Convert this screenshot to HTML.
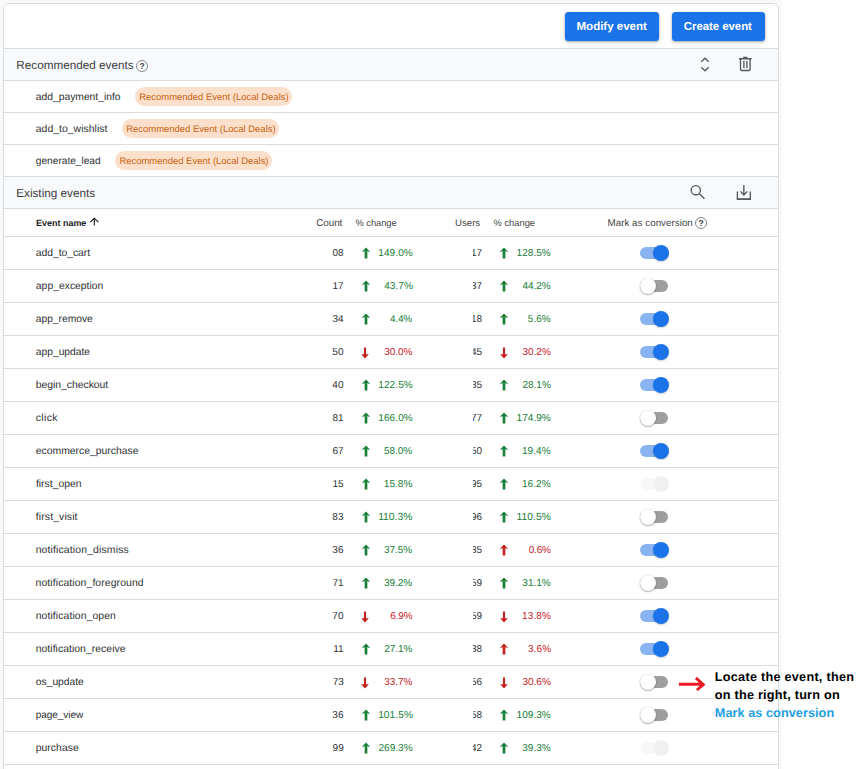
<!DOCTYPE html>
<html lang="en"><head><meta charset="utf-8"><title>Events</title>
<style>
*{box-sizing:border-box;margin:0;padding:0}
html,body{width:867px;height:769px;overflow:hidden;background:#fff}
body{font-family:"Liberation Sans",sans-serif;position:relative;text-rendering:geometricPrecision}
.bg{position:absolute;left:0;top:0;width:782px;height:769px;background:#f8f9fa}
.card{position:absolute;left:3px;top:3px;width:776px;height:800px;background:#fff;border:1px solid #dadce0;border-radius:6px 6px 0 0;overflow:hidden}
.band{position:absolute;left:4px;width:774px;background:#f8f9fa}
.hl{position:absolute;left:4px;width:774px;height:1px;background:#dadce0}
.t{position:absolute;white-space:nowrap;line-height:14px}
.u{position:absolute;left:472.5px;width:9.8px;height:14px;overflow:hidden}
.u span{position:absolute;right:0.2px;top:0;font-size:10px;line-height:14px;color:#2e3134;white-space:nowrap}
.btn{position:absolute;top:12px;height:29px;background:#1a73e8;border-radius:3.5px;box-shadow:0 1px 2px rgba(60,64,67,.3),0 1px 3px 1px rgba(60,64,67,.15)}
.pill{position:absolute;width:157px;height:18.6px;border-radius:9.3px;background:#fde0cb}
.ar{position:absolute;overflow:visible}
.ic{position:absolute;overflow:visible}
.help{position:absolute;width:12px;height:12px;border-radius:50%;border:1px solid #80868b;background:#fff;font-size:8.5px;font-weight:bold;line-height:10px;text-align:center;color:#3c4043}
.tg{position:absolute;left:640px;width:28.8px;height:11.4px}
.tg i{position:absolute;left:0;top:0;width:27.9px;height:11.4px;border-radius:6px;background:#9e9e9e}
.tg b{position:absolute;left:0;top:-2.4px;width:16.2px;height:16.2px;border-radius:50%;background:#fff;box-shadow:0 1px 1.5px rgba(0,0,0,.3),0 0 1px rgba(0,0,0,.25)}
.tg.on i{background:#8ab4f1}
.tg.on b{left:12.7px;background:#1a73e8;box-shadow:0 1px 2px rgba(0,0,0,.2)}
.tg.dis i{background:#f8f8f8}
.tg.dis b{left:12.7px;background:#f1f1f1;box-shadow:none}
</style></head><body>
<div class="bg"></div>
<div class="card"></div>
<div class="band" style="top:49px;height:31px"></div>
<div class="band" style="top:177px;height:31px"></div>
<div class="hl" style="top:48px"></div><div class="hl" style="top:80px"></div><div class="hl" style="top:112px"></div><div class="hl" style="top:144px"></div><div class="hl" style="top:176px"></div><div class="hl" style="top:208px"></div><div class="hl" style="top:236px"></div><div class="hl" style="top:269px"></div><div class="hl" style="top:302px"></div><div class="hl" style="top:335px"></div><div class="hl" style="top:368px"></div><div class="hl" style="top:401px"></div><div class="hl" style="top:434px"></div><div class="hl" style="top:467px"></div><div class="hl" style="top:500px"></div><div class="hl" style="top:533px"></div><div class="hl" style="top:566px"></div><div class="hl" style="top:599px"></div><div class="hl" style="top:632px"></div><div class="hl" style="top:665px"></div><div class="hl" style="top:698px"></div><div class="hl" style="top:731px"></div><div class="hl" style="top:764px"></div>
<div class="btn" style="left:565px;width:94px"></div>
<div class="btn" style="left:672px;width:93px"></div>
<div class="pill" style="left:135.0px;top:87px"></div><div class="pill" style="left:122.0px;top:119px"></div><div class="pill" style="left:115.2px;top:151px"></div>

<svg class="ic" style="left:0;top:0" width="782" height="210" viewBox="0 0 782 210" fill="none" stroke="#54585d" stroke-width="1.35">
<path d="M701.3 61.8 705 58.3l3.7 3.5M701.3 67.2l3.7 3.5 3.7-3.5"/>
<path d="M739 58.7h12.6M743.2 57.6h4.2" stroke-width="1.5"/>
<path d="M740.5 59v10.3a1.2 1.2 0 0 0 1.2 1.2h7.2a1.2 1.2 0 0 0 1.2-1.2V59M743.9 60.8v7.2M746.9 60.8v7.2"/>
<circle cx="695.8" cy="190.2" r="4.6"/>
<path d="M699.1 193.5l5.3 5.3"/>
<path d="M737.4 191.6v7.5h12.9v-7.5"/>
<path d="M736.8 199.2h14.1" stroke-width="1.6"/>
<path d="M743.85 185v10.2M740.4 191.4l3.45 3.6 3.45-3.6"/>
</svg>

<div class="help" style="left:136px;top:59.8px">?</div>
<div class="help" style="left:695.1px;top:217px">?</div>
<svg class="ic" style="left:86px;top:214px" width="16" height="14" viewBox="86 214 16 14"><path d="M94.3 225.5v-6.9M90.2 222.1l4.1-3.8 4.1 3.8" fill="none" stroke="#202124" stroke-width="1.15"/></svg>
<svg class="ar" style="left:360.6px;top:247.4px" width="10" height="12" viewBox="-5 -6 10 12"><path fill="#188038" d="M0-5.6 3.8-1.4 3.3-.9 1.35-2V5.5h-2.7V-2L-3.3-.9-3.8-1.4z"/></svg><svg class="ar" style="left:499.2px;top:247.4px" width="10" height="12" viewBox="-5 -6 10 12"><path fill="#188038" d="M0-5.6 3.8-1.4 3.3-.9 1.35-2V5.5h-2.7V-2L-3.3-.9-3.8-1.4z"/></svg><svg class="ar" style="left:360.6px;top:280.4px" width="10" height="12" viewBox="-5 -6 10 12"><path fill="#188038" d="M0-5.6 3.8-1.4 3.3-.9 1.35-2V5.5h-2.7V-2L-3.3-.9-3.8-1.4z"/></svg><svg class="ar" style="left:499.2px;top:280.4px" width="10" height="12" viewBox="-5 -6 10 12"><path fill="#188038" d="M0-5.6 3.8-1.4 3.3-.9 1.35-2V5.5h-2.7V-2L-3.3-.9-3.8-1.4z"/></svg><svg class="ar" style="left:360.6px;top:313.4px" width="10" height="12" viewBox="-5 -6 10 12"><path fill="#188038" d="M0-5.6 3.8-1.4 3.3-.9 1.35-2V5.5h-2.7V-2L-3.3-.9-3.8-1.4z"/></svg><svg class="ar" style="left:499.2px;top:313.4px" width="10" height="12" viewBox="-5 -6 10 12"><path fill="#188038" d="M0-5.6 3.8-1.4 3.3-.9 1.35-2V5.5h-2.7V-2L-3.3-.9-3.8-1.4z"/></svg><svg class="ar" style="left:359.9px;top:346.5px" width="10" height="12" viewBox="-5 -6 10 12"><path fill="#c5221f" d="M-1.05-5.5h2.1V1.2H3.8L0 5.5-3.8 1.2h2.75z"/></svg><svg class="ar" style="left:498.5px;top:346.5px" width="10" height="12" viewBox="-5 -6 10 12"><path fill="#c5221f" d="M-1.05-5.5h2.1V1.2H3.8L0 5.5-3.8 1.2h2.75z"/></svg><svg class="ar" style="left:360.6px;top:379.4px" width="10" height="12" viewBox="-5 -6 10 12"><path fill="#188038" d="M0-5.6 3.8-1.4 3.3-.9 1.35-2V5.5h-2.7V-2L-3.3-.9-3.8-1.4z"/></svg><svg class="ar" style="left:499.2px;top:379.4px" width="10" height="12" viewBox="-5 -6 10 12"><path fill="#188038" d="M0-5.6 3.8-1.4 3.3-.9 1.35-2V5.5h-2.7V-2L-3.3-.9-3.8-1.4z"/></svg><svg class="ar" style="left:360.6px;top:412.4px" width="10" height="12" viewBox="-5 -6 10 12"><path fill="#188038" d="M0-5.6 3.8-1.4 3.3-.9 1.35-2V5.5h-2.7V-2L-3.3-.9-3.8-1.4z"/></svg><svg class="ar" style="left:499.2px;top:412.4px" width="10" height="12" viewBox="-5 -6 10 12"><path fill="#188038" d="M0-5.6 3.8-1.4 3.3-.9 1.35-2V5.5h-2.7V-2L-3.3-.9-3.8-1.4z"/></svg><svg class="ar" style="left:360.6px;top:445.4px" width="10" height="12" viewBox="-5 -6 10 12"><path fill="#188038" d="M0-5.6 3.8-1.4 3.3-.9 1.35-2V5.5h-2.7V-2L-3.3-.9-3.8-1.4z"/></svg><svg class="ar" style="left:499.2px;top:445.4px" width="10" height="12" viewBox="-5 -6 10 12"><path fill="#188038" d="M0-5.6 3.8-1.4 3.3-.9 1.35-2V5.5h-2.7V-2L-3.3-.9-3.8-1.4z"/></svg><svg class="ar" style="left:360.6px;top:478.4px" width="10" height="12" viewBox="-5 -6 10 12"><path fill="#188038" d="M0-5.6 3.8-1.4 3.3-.9 1.35-2V5.5h-2.7V-2L-3.3-.9-3.8-1.4z"/></svg><svg class="ar" style="left:499.2px;top:478.4px" width="10" height="12" viewBox="-5 -6 10 12"><path fill="#188038" d="M0-5.6 3.8-1.4 3.3-.9 1.35-2V5.5h-2.7V-2L-3.3-.9-3.8-1.4z"/></svg><svg class="ar" style="left:360.6px;top:511.4px" width="10" height="12" viewBox="-5 -6 10 12"><path fill="#188038" d="M0-5.6 3.8-1.4 3.3-.9 1.35-2V5.5h-2.7V-2L-3.3-.9-3.8-1.4z"/></svg><svg class="ar" style="left:499.2px;top:511.4px" width="10" height="12" viewBox="-5 -6 10 12"><path fill="#188038" d="M0-5.6 3.8-1.4 3.3-.9 1.35-2V5.5h-2.7V-2L-3.3-.9-3.8-1.4z"/></svg><svg class="ar" style="left:360.6px;top:544.4px" width="10" height="12" viewBox="-5 -6 10 12"><path fill="#188038" d="M0-5.6 3.8-1.4 3.3-.9 1.35-2V5.5h-2.7V-2L-3.3-.9-3.8-1.4z"/></svg><svg class="ar" style="left:499.2px;top:544.4px" width="10" height="12" viewBox="-5 -6 10 12"><path fill="#c5221f" d="M0-5.6 3.8-1.4 3.3-.9 1.35-2V5.5h-2.7V-2L-3.3-.9-3.8-1.4z"/></svg><svg class="ar" style="left:360.6px;top:577.4px" width="10" height="12" viewBox="-5 -6 10 12"><path fill="#188038" d="M0-5.6 3.8-1.4 3.3-.9 1.35-2V5.5h-2.7V-2L-3.3-.9-3.8-1.4z"/></svg><svg class="ar" style="left:499.2px;top:577.4px" width="10" height="12" viewBox="-5 -6 10 12"><path fill="#188038" d="M0-5.6 3.8-1.4 3.3-.9 1.35-2V5.5h-2.7V-2L-3.3-.9-3.8-1.4z"/></svg><svg class="ar" style="left:359.9px;top:610.5px" width="10" height="12" viewBox="-5 -6 10 12"><path fill="#c5221f" d="M-1.05-5.5h2.1V1.2H3.8L0 5.5-3.8 1.2h2.75z"/></svg><svg class="ar" style="left:498.5px;top:610.5px" width="10" height="12" viewBox="-5 -6 10 12"><path fill="#c5221f" d="M-1.05-5.5h2.1V1.2H3.8L0 5.5-3.8 1.2h2.75z"/></svg><svg class="ar" style="left:360.6px;top:643.4px" width="10" height="12" viewBox="-5 -6 10 12"><path fill="#188038" d="M0-5.6 3.8-1.4 3.3-.9 1.35-2V5.5h-2.7V-2L-3.3-.9-3.8-1.4z"/></svg><svg class="ar" style="left:499.2px;top:643.4px" width="10" height="12" viewBox="-5 -6 10 12"><path fill="#c5221f" d="M0-5.6 3.8-1.4 3.3-.9 1.35-2V5.5h-2.7V-2L-3.3-.9-3.8-1.4z"/></svg><svg class="ar" style="left:359.9px;top:676.5px" width="10" height="12" viewBox="-5 -6 10 12"><path fill="#c5221f" d="M-1.05-5.5h2.1V1.2H3.8L0 5.5-3.8 1.2h2.75z"/></svg><svg class="ar" style="left:498.5px;top:676.5px" width="10" height="12" viewBox="-5 -6 10 12"><path fill="#c5221f" d="M-1.05-5.5h2.1V1.2H3.8L0 5.5-3.8 1.2h2.75z"/></svg><svg class="ar" style="left:360.6px;top:709.4px" width="10" height="12" viewBox="-5 -6 10 12"><path fill="#188038" d="M0-5.6 3.8-1.4 3.3-.9 1.35-2V5.5h-2.7V-2L-3.3-.9-3.8-1.4z"/></svg><svg class="ar" style="left:499.2px;top:709.4px" width="10" height="12" viewBox="-5 -6 10 12"><path fill="#188038" d="M0-5.6 3.8-1.4 3.3-.9 1.35-2V5.5h-2.7V-2L-3.3-.9-3.8-1.4z"/></svg><svg class="ar" style="left:360.6px;top:742.4px" width="10" height="12" viewBox="-5 -6 10 12"><path fill="#188038" d="M0-5.6 3.8-1.4 3.3-.9 1.35-2V5.5h-2.7V-2L-3.3-.9-3.8-1.4z"/></svg><svg class="ar" style="left:499.2px;top:742.4px" width="10" height="12" viewBox="-5 -6 10 12"><path fill="#188038" d="M0-5.6 3.8-1.4 3.3-.9 1.35-2V5.5h-2.7V-2L-3.3-.9-3.8-1.4z"/></svg>
<div class="tg on" style="top:247.4px"><i></i><b></b></div><div class="tg off" style="top:280.4px"><i></i><b></b></div><div class="tg on" style="top:313.4px"><i></i><b></b></div><div class="tg on" style="top:346.4px"><i></i><b></b></div><div class="tg on" style="top:379.4px"><i></i><b></b></div><div class="tg off" style="top:412.4px"><i></i><b></b></div><div class="tg on" style="top:445.4px"><i></i><b></b></div><div class="tg dis" style="top:478.4px"><i></i><b></b></div><div class="tg off" style="top:511.4px"><i></i><b></b></div><div class="tg on" style="top:544.4px"><i></i><b></b></div><div class="tg off" style="top:577.4px"><i></i><b></b></div><div class="tg on" style="top:610.4px"><i></i><b></b></div><div class="tg on" style="top:643.4px"><i></i><b></b></div><div class="tg off" style="top:676.4px"><i></i><b></b></div><div class="tg off" style="top:709.4px"><i></i><b></b></div><div class="tg dis" style="top:742.4px"><i></i><b></b></div>

<svg class="ic" style="left:676px;top:672px" width="34" height="24" viewBox="676 672 34 24"><path d="M678.9 684.3H703M695.9 677.9l7.4 6.8-6.4 5.3" fill="none" stroke="#ed1c24" stroke-width="2.9" stroke-linejoin="miter"/></svg>

<span class="t" id="t0" style="left:16.30px;top:59px;font-size:11.7px;color:#3c4043;letter-spacing:0.021px;">Recommended events</span><span class="t" id="t1" style="left:16.22px;top:187px;font-size:11.7px;color:#3c4043;letter-spacing:0.016px;">Existing events</span><span class="t" id="t2" style="left:576.48px;top:20px;font-size:11.6px;color:#fff;font-weight:bold;letter-spacing:-0.038px;">Modify event</span><span class="t" id="t3" style="left:683.82px;top:20px;font-size:11.51px;color:#fff;font-weight:bold;letter-spacing:-0.082px;">Create event</span><span class="t" id="t4" style="left:35.78px;top:91px;font-size:10.32px;color:#2e3134;letter-spacing:-0.006px;">add_payment_info</span><span class="t" id="t5" style="left:139.16px;top:91px;font-size:9.47px;color:#c9600f;">Recommended Event (Local Deals)</span><span class="t" id="t6" style="left:35.81px;top:123px;font-size:10.4px;color:#2e3134;letter-spacing:0.036px;">add_to_wishlist</span><span class="t" id="t7" style="left:126.16px;top:123px;font-size:9.47px;color:#c9600f;">Recommended Event (Local Deals)</span><span class="t" id="t8" style="left:35.84px;top:155px;font-size:10.18px;color:#2e3134;letter-spacing:-0.019px;">generate_lead</span><span class="t" id="t9" style="left:119.45px;top:155px;font-size:9.47px;color:#c9600f;letter-spacing:-0.013px;">Recommended Event (Local Deals)</span><span class="t" id="t10" style="left:36.05px;top:216px;font-size:8.98px;color:#202124;font-weight:bold;letter-spacing:-0.006px;">Event name</span><span class="t" id="t11" style="left:316.20px;top:217px;font-size:9.92px;color:#444746;letter-spacing:-0.065px;">Count</span><span class="t" id="t12" style="left:355.56px;top:216px;font-size:9.34px;color:#444746;letter-spacing:-0.050px;">% change</span><span class="t" id="t13" style="left:454.94px;top:217px;font-size:9.64px;color:#444746;letter-spacing:0.027px;">Users</span><span class="t" id="t14" style="left:493.52px;top:216px;font-size:9.39px;color:#444746;letter-spacing:-0.021px;">% change</span><span class="t" id="t15" style="left:607.49px;top:217px;font-size:9.79px;color:#444746;letter-spacing:0.031px;">Mark as conversion</span><span class="t" id="t16" style="left:35.80px;top:247px;font-size:10.38px;color:#2e3134;letter-spacing:-0.046px;">add_to_cart</span><span class="t" id="t17" style="right:523.50px;top:247px;font-size:10px;color:#2e3134;">08</span><span class="t" id="t18" style="left:378.19px;top:247px;font-size:10.08px;color:#188038;letter-spacing:0.088px;">149.0%</span><span class="t" id="t19" style="left:516.54px;top:247px;font-size:10.08px;color:#188038;letter-spacing:0.017px;">128.5%</span><span class="t" id="t20" style="left:35.85px;top:280px;font-size:10.35px;color:#2e3134;letter-spacing:0.018px;">app_exception</span><span class="t" id="t21" style="right:523.35px;top:280px;font-size:10px;color:#2e3134;">17</span><span class="t" id="t22" style="left:384.23px;top:280px;font-size:10.05px;color:#188038;letter-spacing:0.040px;">43.7%</span><span class="t" id="t23" style="left:522.58px;top:280px;font-size:10.05px;color:#188038;letter-spacing:-0.085px;">44.2%</span><span class="t" id="t24" style="left:35.77px;top:313px;font-size:10.24px;color:#2e3134;letter-spacing:0.006px;">app_remove</span><span class="t" id="t25" style="right:523.36px;top:313px;font-size:10px;color:#2e3134;">34</span><span class="t" id="t26" style="left:390.03px;top:313px;font-size:10.0px;color:#188038;letter-spacing:-0.192px;">4.4%</span><span class="t" id="t27" style="left:527.86px;top:313px;font-size:10.0px;color:#188038;letter-spacing:0.016px;">5.6%</span><span class="t" id="t28" style="left:35.82px;top:346px;font-size:10.32px;color:#2e3134;letter-spacing:-0.029px;">app_update</span><span class="t" id="t29" style="right:523.54px;top:346px;font-size:10px;color:#2e3134;">50</span><span class="t" id="t30" style="left:384.30px;top:346px;font-size:10.05px;color:#c5221f;letter-spacing:-0.086px;">30.0%</span><span class="t" id="t31" style="left:522.38px;top:346px;font-size:10.05px;color:#c5221f;">30.2%</span><span class="t" id="t32" style="left:35.65px;top:379px;font-size:10.4px;color:#2e3134;letter-spacing:-0.016px;">begin_checkout</span><span class="t" id="t33" style="right:523.54px;top:379px;font-size:10px;color:#2e3134;">40</span><span class="t" id="t34" style="left:378.19px;top:379px;font-size:10.08px;color:#188038;letter-spacing:0.088px;">122.5%</span><span class="t" id="t35" style="left:522.39px;top:379px;font-size:10.05px;color:#188038;">28.1%</span><span class="t" id="t36" style="left:35.77px;top:412px;font-size:10.4px;color:#2e3134;letter-spacing:0.380px;">click</span><span class="t" id="t37" style="right:523.40px;top:412px;font-size:10px;color:#2e3134;">81</span><span class="t" id="t38" style="left:378.19px;top:412px;font-size:10.08px;color:#188038;letter-spacing:0.088px;">166.0%</span><span class="t" id="t39" style="left:516.54px;top:412px;font-size:10.08px;color:#188038;letter-spacing:0.017px;">174.9%</span><span class="t" id="t40" style="left:35.79px;top:445px;font-size:10.38px;color:#2e3134;">ecommerce_purchase</span><span class="t" id="t41" style="right:523.35px;top:445px;font-size:10px;color:#2e3134;">67</span><span class="t" id="t42" style="left:384.05px;top:445px;font-size:10.05px;color:#188038;letter-spacing:-0.070px;">58.0%</span><span class="t" id="t43" style="left:521.92px;top:445px;font-size:10.05px;color:#188038;letter-spacing:0.077px;">19.4%</span><span class="t" id="t44" style="left:35.88px;top:478px;font-size:10.4px;color:#2e3134;letter-spacing:0.012px;">first_open</span><span class="t" id="t45" style="right:523.49px;top:478px;font-size:10px;color:#2e3134;">15</span><span class="t" id="t46" style="left:383.84px;top:478px;font-size:10.05px;color:#188038;">15.8%</span><span class="t" id="t47" style="left:521.92px;top:478px;font-size:10.05px;color:#188038;letter-spacing:0.077px;">16.2%</span><span class="t" id="t48" style="left:35.83px;top:511px;font-size:10.4px;color:#2e3134;letter-spacing:0.121px;">first_visit</span><span class="t" id="t49" style="right:523.55px;top:511px;font-size:10px;color:#2e3134;">83</span><span class="t" id="t50" style="left:378.15px;top:511px;font-size:10.3px;color:#188038;letter-spacing:0.010px;">110.3%</span><span class="t" id="t51" style="left:516.50px;top:511px;font-size:10.3px;color:#188038;letter-spacing:0.025px;">110.5%</span><span class="t" id="t52" style="left:35.64px;top:544px;font-size:10.4px;color:#2e3134;letter-spacing:0.157px;">notification_dismiss</span><span class="t" id="t53" style="right:523.54px;top:544px;font-size:10px;color:#2e3134;">36</span><span class="t" id="t54" style="left:384.12px;top:544px;font-size:10.05px;color:#188038;letter-spacing:-0.087px;">37.5%</span><span class="t" id="t55" style="left:528.67px;top:544px;font-size:10.0px;color:#c5221f;letter-spacing:-0.169px;">0.6%</span><span class="t" id="t56" style="left:35.61px;top:577px;font-size:10.4px;color:#2e3134;letter-spacing:0.101px;">notification_foreground</span><span class="t" id="t57" style="right:523.40px;top:577px;font-size:10px;color:#2e3134;">71</span><span class="t" id="t58" style="left:384.10px;top:577px;font-size:10.05px;color:#188038;letter-spacing:-0.076px;">39.2%</span><span class="t" id="t59" style="left:522.36px;top:577px;font-size:10.05px;color:#188038;letter-spacing:-0.029px;">31.1%</span><span class="t" id="t60" style="left:35.69px;top:610px;font-size:10.4px;color:#2e3134;letter-spacing:0.101px;">notification_open</span><span class="t" id="t61" style="right:523.56px;top:610px;font-size:10px;color:#2e3134;">70</span><span class="t" id="t62" style="left:390.13px;top:610px;font-size:10.0px;color:#c5221f;letter-spacing:-0.061px;">6.9%</span><span class="t" id="t63" style="left:522.05px;top:610px;font-size:10.05px;color:#c5221f;letter-spacing:0.087px;">13.8%</span><span class="t" id="t64" style="left:35.69px;top:643px;font-size:10.4px;color:#2e3134;letter-spacing:0.049px;">notification_receive</span><span class="t" id="t65" style="right:523.39px;top:643px;font-size:10px;color:#2e3134;">11</span><span class="t" id="t66" style="left:384.32px;top:643px;font-size:10.05px;color:#188038;letter-spacing:-0.119px;">27.1%</span><span class="t" id="t67" style="left:527.93px;top:643px;font-size:10.0px;color:#c5221f;letter-spacing:0.101px;">3.6%</span><span class="t" id="t68" style="left:35.86px;top:676px;font-size:10.32px;color:#2e3134;letter-spacing:-0.029px;">os_update</span><span class="t" id="t69" style="right:523.09px;top:676px;font-size:10px;color:#2e3134;">73</span><span class="t" id="t70" style="left:384.29px;top:676px;font-size:10.05px;color:#c5221f;letter-spacing:-0.091px;">33.7%</span><span class="t" id="t71" style="left:522.38px;top:676px;font-size:10.05px;color:#c5221f;">30.6%</span><span class="t" id="t72" style="left:35.65px;top:709px;font-size:10.08px;color:#2e3134;letter-spacing:-0.064px;">page_view</span><span class="t" id="t73" style="right:523.54px;top:709px;font-size:10px;color:#2e3134;">36</span><span class="t" id="t74" style="left:378.16px;top:709px;font-size:10.08px;color:#188038;letter-spacing:0.100px;">101.5%</span><span class="t" id="t75" style="left:516.54px;top:709px;font-size:10.08px;color:#188038;letter-spacing:0.017px;">109.3%</span><span class="t" id="t76" style="left:35.73px;top:742px;font-size:10.4px;color:#2e3134;letter-spacing:0.037px;">purchase</span><span class="t" id="t77" style="right:523.31px;top:742px;font-size:10px;color:#2e3134;">99</span><span class="t" id="t78" style="left:378.40px;top:742px;font-size:10.08px;color:#188038;letter-spacing:0.028px;">269.3%</span><span class="t" id="t79" style="left:522.18px;top:742px;font-size:10.05px;color:#188038;letter-spacing:0.030px;">39.3%</span><span class="t" id="t80" style="left:714.84px;top:670px;font-size:12.67px;color:#000;font-weight:bold;letter-spacing:0.260px;">Locate the event, then</span><span class="t" id="t81" style="left:714.84px;top:688px;font-size:12.67px;color:#000;font-weight:bold;letter-spacing:0.231px;">on the right, turn on</span><span class="t" id="t82" style="left:714.84px;top:706px;font-size:12.67px;color:#1e9fe3;font-weight:bold;letter-spacing:0.066px;">Mark as conversion</span><span class="u" style="top:247px"><span>17</span></span><span class="u" style="top:280px"><span>37</span></span><span class="u" style="top:313px"><span>18</span></span><span class="u" style="top:346px"><span>45</span></span><span class="u" style="top:379px"><span>35</span></span><span class="u" style="top:412px"><span>77</span></span><span class="u" style="top:445px"><span>50</span></span><span class="u" style="top:478px"><span>95</span></span><span class="u" style="top:511px"><span>96</span></span><span class="u" style="top:544px"><span>35</span></span><span class="u" style="top:577px"><span>59</span></span><span class="u" style="top:610px"><span>59</span></span><span class="u" style="top:643px"><span>38</span></span><span class="u" style="top:676px"><span>56</span></span><span class="u" style="top:709px"><span>58</span></span><span class="u" style="top:742px"><span>42</span></span>
</body></html>
